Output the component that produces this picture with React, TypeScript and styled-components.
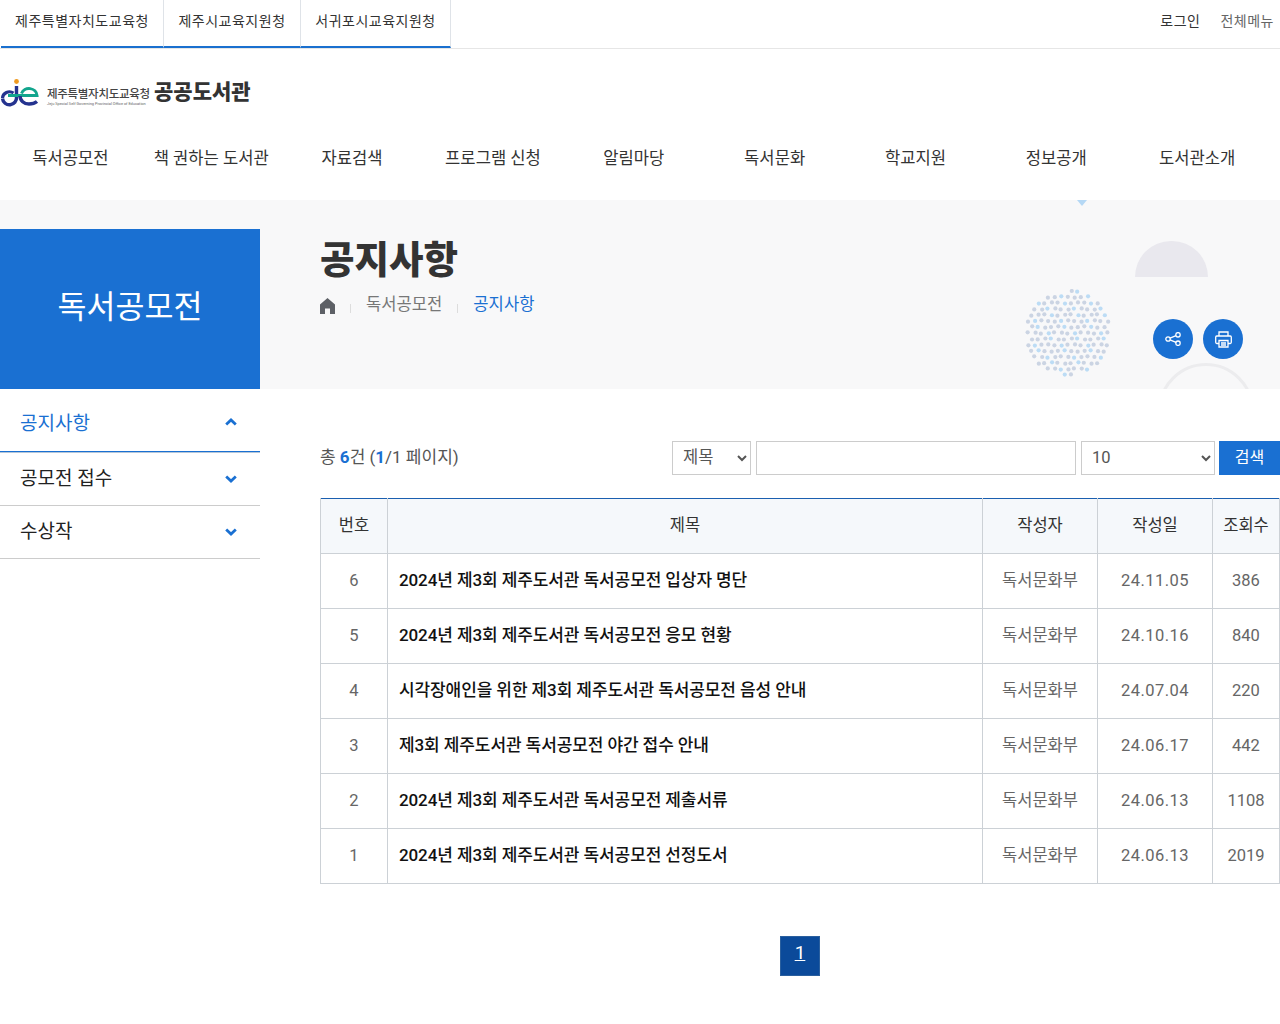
import React from 'react'
import styled, { createGlobalStyle } from 'styled-components'

const GlobalStyle = createGlobalStyle`
  html, body { margin: 0; padding: 0; background: #fff; }
  body {
    font-family: Roboto, "Noto Sans CJK KR", "Noto Sans", sans-serif;
    color: #333;
    overflow-x: hidden;
  }
  * { box-sizing: border-box; }
  a { color: inherit; text-decoration: none; }
`

const TopBar = styled.div`
  height: 49px;
  border-bottom: 1px solid #e6e6e6;
  display: flex;
  justify-content: space-between;
`
const TopTabs = styled.div`
  display: flex;
  padding-left: 1px;
  height: 48px;
`
const TopTab = styled.a<{ $w: number }>`
  width: ${({ $w }) => $w}px;
  height: 48px;
  border-right: 1px solid #dfe3e8;
  border-bottom: 2px solid #1a70cf;
  display: flex;
  align-items: center;
  justify-content: center;
  padding-bottom: 6px;
  font-size: 14px;
  letter-spacing: 0.5px;
  color: #333;
`
const TopLinks = styled.div`
  display: flex;
  gap: 20px;
  padding: 11px 6px 0 0;
  font-size: 14px;
  line-height: 20px;
  letter-spacing: 0.5px;
`
const TopLink = styled.a<{ $muted?: boolean }>`
  color: ${({ $muted }) => ($muted ? '#666' : '#333')};
`

const LogoRow = styled.div`
  height: 80px;
  display: flex;
  align-items: center;
  padding-top: 7px;
`
const LogoText = styled.div`
  display: flex;
  flex-direction: column;
  width: 103px;
  margin-left: 7px;
  padding-top: 9px;
`
const LogoOrg = styled.span`
  font-size: 11.5px;
  line-height: 14px;
  font-weight: 500;
  letter-spacing: -0.3px;
  color: #444;
  white-space: nowrap;
`
const LogoEng = styled.span`
  font-size: 3.9px;
  line-height: 6px;
  color: #666;
  white-space: nowrap;
`
const LogoName = styled.span`
  font-size: 21px;
  font-weight: 900;
  color: #333;
  margin: 0 0 5px 4px;
`

const MainNav = styled.nav`
  height: 71px;
  display: flex;
`
const NavItem = styled.a`
  width: 140.85px;
  height: 56px;
  padding-bottom: 1px;
  display: flex;
  align-items: center;
  justify-content: center;
  font-size: 16.6px;
  color: #333;
  white-space: nowrap;
`

const Hero = styled.div`
  position: relative;
  height: 189px;
  background: #f8f8f9;
  padding-left: 320px;
  overflow: hidden;
`
const Marker = styled.div`
  position: absolute;
  left: 1077px;
  top: 0;
  border-left: 5px solid transparent;
  border-right: 5px solid transparent;
  border-top: 6px solid #b5d8f5;
`
const SideTitle = styled.div`
  position: absolute;
  left: 0;
  top: 29px;
  width: 260px;
  height: 160px;
  padding-bottom: 10px;
  background: #1a70d2;
  color: #fff;
  display: flex;
  align-items: center;
  justify-content: center;
  font-size: 31.5px;
  font-weight: 400;
`
const PageTitle = styled.h1`
  margin: 0;
  padding-top: 35px;
  font-size: 37.5px;
  line-height: 50px;
  font-weight: 900;
  color: #333;
`
const Crumbs = styled.div`
  display: flex;
  align-items: center;
  height: 24px;
  margin-top: 8px;
  font-size: 16.6px;
  color: #666;
`
const Crumb = styled.span<{ $active?: boolean }>`
  color: ${({ $active }) => ($active ? '#1a70d2' : '#777')};
  position: relative;
  top: -2px;
`
const CrumbSep = styled.i`
  width: 1px;
  height: 9px;
  background: #ddd;
  margin: 6px 15px 0;
`
const HomeIcon = styled.svg`
  width: 15px;
  height: 16px;
  fill: #5d6066;
  margin-top: 2px;
`
const Dome = styled.div`
  position: absolute;
  left: 1135px;
  top: 41px;
  width: 73px;
  height: 36px;
  border-radius: 37px 37px 0 0;
  background: #e9e8ee;
`
const Ring = styled.div`
  position: absolute;
  left: 1158px;
  top: 163px;
  width: 96px;
  height: 96px;
  border-radius: 50%;
  border: 3px solid #ececee;
`
const Dots = styled.svg`
  position: absolute;
  left: 1023px;
  top: 89px;
  width: 89px;
  height: 89px;
`
const RoundButtons = styled.div`
  position: absolute;
  left: 1153px;
  top: 119px;
  display: flex;
  gap: 10px;
`
const RoundButton = styled.button`
  width: 40px;
  height: 40px;
  padding: 0;
  border: 0;
  border-radius: 50%;
  background: #1a70d2;
  display: flex;
  align-items: center;
  justify-content: center;
`

const Body = styled.div`
  display: flex;
`
const Side = styled.aside`
  width: 260px;
  flex: none;
`
const SideItem = styled.a<{ $active?: boolean }>`
  height: ${({ $active }) => ($active ? '63px' : '53px')};
  margin-bottom: ${({ $active }) => ($active ? '1px' : '0')};
  padding: 0 23px 5px 20px;
  padding-top: ${({ $active }) => ($active ? '8px' : '0')};
  display: flex;
  align-items: center;
  justify-content: space-between;
  font-size: 19px;
  color: ${({ $active }) => ($active ? '#1a70d2' : '#222')};
  border-bottom: 1px solid ${({ $active }) => ($active ? '#1a70d2' : '#ccc')};
  box-shadow: ${({ $active }) => ($active ? '0 1px 0 #b5c6d8' : 'none')};
`
const Chevron = styled.svg<{ $up?: boolean }>`
  width: 12px;
  height: 8px;
  position: relative;
  top: ${({ $up }) => ($up ? '0' : '2px')};
  fill: none;
  stroke: #1a70d2;
  stroke-width: 2.8;
  transform: ${({ $up }) => ($up ? 'rotate(180deg)' : 'none')};
`
const Content = styled.main`
  flex: 1;
  margin-left: 60px;
  padding-top: 52px;
  min-width: 0;
`
const SearchBar = styled.div`
  height: 34px;
  display: flex;
  align-items: center;
`
const Total = styled.div`
  flex: 1;
  font-size: 17px;
  color: #555;
  position: relative;
  top: -3px;
  b { color: #1a70d2; font-weight: 700; }
`
const Select = styled.select<{ $w: number }>`
  width: ${({ $w }) => $w}px;
  height: 34px;
  padding: 0 0 2px 6px;
  border: 1px solid #ccc;
  background: #fff;
  color: #555;
  font: 400 16.5px Roboto, "Noto Sans CJK KR", sans-serif;
  border-radius: 0;
`
const SearchInput = styled.input`
  width: 320px;
  height: 34px;
  margin: 0 5px;
  border: 1px solid #ccc;
  background: #fff;
`
const SearchButton = styled.button`
  width: 61px;
  height: 34px;
  margin-left: 4px;
  border: 0;
  padding: 0 0 5px;
  background: #1a70d2;
  color: #fff;
  font: 400 16px Roboto, "Noto Sans CJK KR", sans-serif;
`
const Table = styled.table`
  width: 960px;
  margin-top: 23px;
  table-layout: fixed;
  border-collapse: collapse;
  border-top: 1px solid #1a5fb0;
`
const Th = styled.th<{ $w?: number }>`
  ${({ $w }) => ($w ? `width: ${$w}px;` : '')}
  height: 55px;
  padding: 0 0 5px;
  background: #f5f8fb;
  border: 1px solid #ccd1d6;
  border-top: 0;
  font-size: 16.5px;
  font-weight: 400;
  color: #333;
`
const Td = styled.td`
  height: 55px;
  padding: 0 0 2px;
  border: 1px solid #ccd1d6;
  font-size: 16.5px;
  text-align: center;
  color: #666;
`
const DateCell = styled(Td)`
  letter-spacing: 0.45px;
`
const Writer = styled(Td)`
  padding-bottom: 4px;
`
const Subject = styled(Td)`
  text-align: left;
  padding-left: 11px;
  padding-bottom: 5px;
  color: #111;
  font-size: 17px;
  letter-spacing: -0.1px;
  font-weight: 500;
`
const Pager = styled.div`
  display: flex;
  justify-content: center;
  padding: 52px 0 48px;
`
const PageLink = styled.a`
  width: 40px;
  height: 40px;
  display: flex;
  align-items: center;
  justify-content: center;
  padding-bottom: 7px;
  background: #0b4a9a;
  border: 1px solid #2a5f9e;
  color: #fff;
  font-size: 19px;
  text-decoration: underline;
`

const rows = [
  { no: 6, title: '2024년 제3회 제주도서관 독서공모전 입상자 명단', date: '24.11.05', hit: 386 },
  { no: 5, title: '2024년 제3회 제주도서관 독서공모전 응모 현황', date: '24.10.16', hit: 840 },
  { no: 4, title: '시각장애인을 위한 제3회 제주도서관 독서공모전 음성 안내', date: '24.07.04', hit: 220 },
  { no: 3, title: '제3회 제주도서관 독서공모전 야간 접수 안내', date: '24.06.17', hit: 442 },
  { no: 2, title: '2024년 제3회 제주도서관 독서공모전 제출서류', date: '24.06.13', hit: 1108 },
  { no: 1, title: '2024년 제3회 제주도서관 독서공모전 선정도서', date: '24.06.13', hit: 2019 },
]

const navItems = ['독서공모전', '책 권하는 도서관', '자료검색', '프로그램 신청', '알림마당', '독서문화', '학교지원', '정보공개', '도서관소개']

// hex-packed dots with a little wobble, clipped to the circle
const dotList: { x: number; y: number; c: string }[] = []
for (let row = 0; row < 15; row++) {
  for (let col = 0; col < 15; col++) {
    const x = 2 + col * 6.6 + (row % 2) * 3.3 + Math.sin(row * 7 + col * 3) * 0.7
    const y = 2 + row * 6 + Math.cos(row * 5 + col * 11) * 0.7
    if (Math.hypot(x - 44.5, y - 44.5) < 43) {
      dotList.push({ x, y, c: (row * 3 + col * 5) % 4 === 0 ? '#bcdcf5' : '#cbd4e3' })
    }
  }
}

function Logo() {
  return (
    <svg width="40" height="30" viewBox="0 0 40 30">
      <circle cx="16.5" cy="3.5" r="2.4" fill="#ef9a1f" />
      <path d="M16.5 8v11a7 7 0 0 1-14 1.5" fill="none" stroke="#25338f" strokeWidth="3.4" />
      <path d="M2.5 20a7 6.5 0 0 1 11-5" fill="none" stroke="#25338f" strokeWidth="3.2" />
      <path d="M8 17.5h14" stroke="#12a58d" strokeWidth="3" />
      <path d="M22 17.5h15a8 7.5 0 0 0-15.5-2" fill="none" stroke="#12a58d" strokeWidth="3" />
      <path d="M20 18a9 8 0 0 0 9 8c3 0 6-.8 8-2.5" fill="none" stroke="#25338f" strokeWidth="3.4" />
    </svg>
  )
}

function Arrow({ up }: { up?: boolean }) {
  return (
    <Chevron $up={up} viewBox="0 0 12 8">
      <path d="M1.2 1.5 6 6l4.8-4.5" />
    </Chevron>
  )
}

export default function App() {
  return (
    <>
      <GlobalStyle />
      <TopBar>
        <TopTabs>
          <TopTab $w={163} href="#">제주특별자치도교육청</TopTab>
          <TopTab $w={137} href="#">제주시교육지원청</TopTab>
          <TopTab $w={150} href="#">서귀포시교육지원청</TopTab>
        </TopTabs>
        <TopLinks>
          <TopLink href="#">로그인</TopLink>
          <TopLink href="#" $muted>전체메뉴</TopLink>
        </TopLinks>
      </TopBar>
      <LogoRow>
        <Logo />
        <LogoText>
          <LogoOrg>제주특별자치도교육청</LogoOrg>
          <LogoEng>Jeju Special Self Governing Provincial Office of Education</LogoEng>
        </LogoText>
        <LogoName>공공도서관</LogoName>
      </LogoRow>
      <MainNav>
        {navItems.map((item) => (
          <NavItem href="#" key={item}>{item}</NavItem>
        ))}
      </MainNav>
      <Hero>
        <Marker />
        <SideTitle>독서공모전</SideTitle>
        <PageTitle>공지사항</PageTitle>
        <Crumbs>
          <HomeIcon viewBox="0 0 15 16"><path d="M7.5 0 15 6.5V16H10v-5.5H5V16H0V6.5z" /></HomeIcon>
          <CrumbSep />
          <Crumb>독서공모전</Crumb>
          <CrumbSep />
          <Crumb $active>공지사항</Crumb>
        </Crumbs>
        <Dome />
        <Ring />
        <Dots viewBox="0 0 89 89">
          {dotList.map((d, i) => (
            <circle key={i} cx={d.x} cy={d.y} r="2.1" fill={d.c} />
          ))}
        </Dots>
        <RoundButtons>
          <RoundButton aria-label="공유">
            <svg width="16" height="14" viewBox="0 0 16 14" fill="none" stroke="#fff" strokeWidth="1.3">
              <circle cx="3" cy="7" r="2.2" />
              <circle cx="13" cy="2.8" r="2.2" />
              <circle cx="13" cy="11.2" r="2.2" />
              <path d="M5 6.1 11 3.7M5 7.9l6 2.4" />
            </svg>
          </RoundButton>
          <RoundButton aria-label="인쇄">
            <svg width="17" height="17" viewBox="0 0 17 17" fill="none" stroke="#fff" strokeWidth="1.3">
              <path d="M4 5V1h9v4" />
              <path d="M4 12.5H1.8A1.2 1.2 0 0 1 .7 11.3V6.2A1.2 1.2 0 0 1 1.8 5h13.4a1.2 1.2 0 0 1 1.1 1.2v5.1a1.2 1.2 0 0 1-1.1 1.2H13" />
              <path d="M4 9.5h9V16H4z" />
              <path d="M6 12h5M6 14h5" />
            </svg>
          </RoundButton>
        </RoundButtons>
      </Hero>
      <Body>
        <Side>
          <SideItem href="#" $active>공지사항<Arrow up /></SideItem>
          <SideItem href="#">공모전 접수<Arrow /></SideItem>
          <SideItem href="#">수상작<Arrow /></SideItem>
        </Side>
        <Content>
          <SearchBar>
            <Total>총 <b>6</b>건 (<b>1</b>/1 페이지)</Total>
            <Select $w={79} defaultValue="제목">
              <option>제목</option>
              <option>내용</option>
            </Select>
            <SearchInput aria-label="검색어" />
            <Select $w={134} defaultValue="10">
              <option>10</option>
              <option>20</option>
            </Select>
            <SearchButton>검색</SearchButton>
          </SearchBar>
          <Table>
            <thead>
              <tr>
                <Th $w={67}>번호</Th>
                <Th>제목</Th>
                <Th $w={115}>작성자</Th>
                <Th $w={115}>작성일</Th>
                <Th $w={67}>조회수</Th>
              </tr>
            </thead>
            <tbody>
              {rows.map((r) => (
                <tr key={r.no}>
                  <Td>{r.no}</Td>
                  <Subject>{r.title}</Subject>
                  <Writer>독서문화부</Writer>
                  <DateCell>{r.date}</DateCell>
                  <Td>{r.hit}</Td>
                </tr>
              ))}
            </tbody>
          </Table>
          <Pager>
            <PageLink href="#">1</PageLink>
          </Pager>
        </Content>
      </Body>
    </>
  )
}
